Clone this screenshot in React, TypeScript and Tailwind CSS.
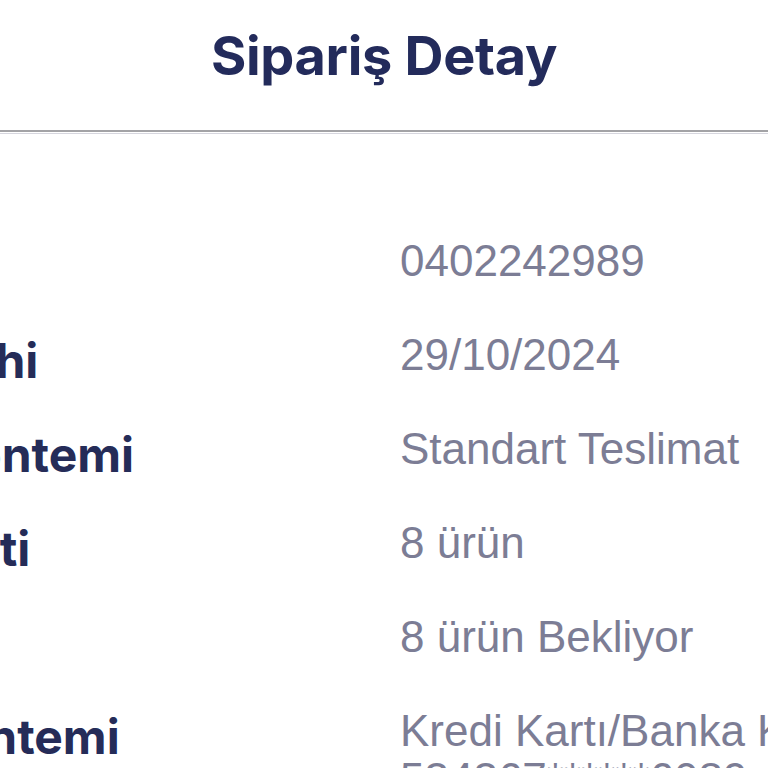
import React from 'react';

type Row = {
  label: string;
  value: string[];
};

const rows: Row[] = [
  { label: 'Sipariş No', value: ['0402242989'] },
  { label: 'Sipariş Tarihi', value: ['29/10/2024'] },
  { label: 'Teslimat Yöntemi', value: ['Standart Teslimat'] },
  { label: 'Sipariş Adeti', value: ['8 ürün'] },
  { label: 'Durum', value: ['8 ürün Bekliyor'] },
  { label: 'Tahsilat Yöntemi', value: ['Kredi Kartı/Banka Kartı', '534367******6089'] },
];

const App = () => {
  return (
    <div className="h-[768px] w-full overflow-hidden bg-white">
      {/* header */}
      <div className="flex h-[130px] items-start justify-center pt-[24px]">
        <h1 className="font-['Inter',sans-serif] text-[54px] font-bold leading-[64px] tracking-[-0.3px] text-[#232b5b]">
          Sipariş Detay
        </h1>
      </div>
      <div className="h-[2px] bg-[#a3a3a6]" />
      <div className="h-px bg-white" />
      <div className="h-px bg-[#d6d6de]" />

      {/* order info */}
      <div className="ml-[-268px] pt-[103px]">
        {rows.map((row) => (
          <div key={row.label} className="flex h-[94px] items-start">
            <div className="w-[668px] shrink-0 whitespace-nowrap pt-[3px] font-['Inter',sans-serif] text-[48px] font-bold leading-[54px] text-[#252c58]">
              {row.label}
            </div>
            <div className="whitespace-nowrap font-['Liberation_Sans',Arial,sans-serif] text-[44px] leading-[48px] text-[#7c7d95]">
              {row.value.map((line) => (
                <div key={line}>{line}</div>
              ))}
            </div>
          </div>
        ))}
      </div>
    </div>
  );
};

export default App;
